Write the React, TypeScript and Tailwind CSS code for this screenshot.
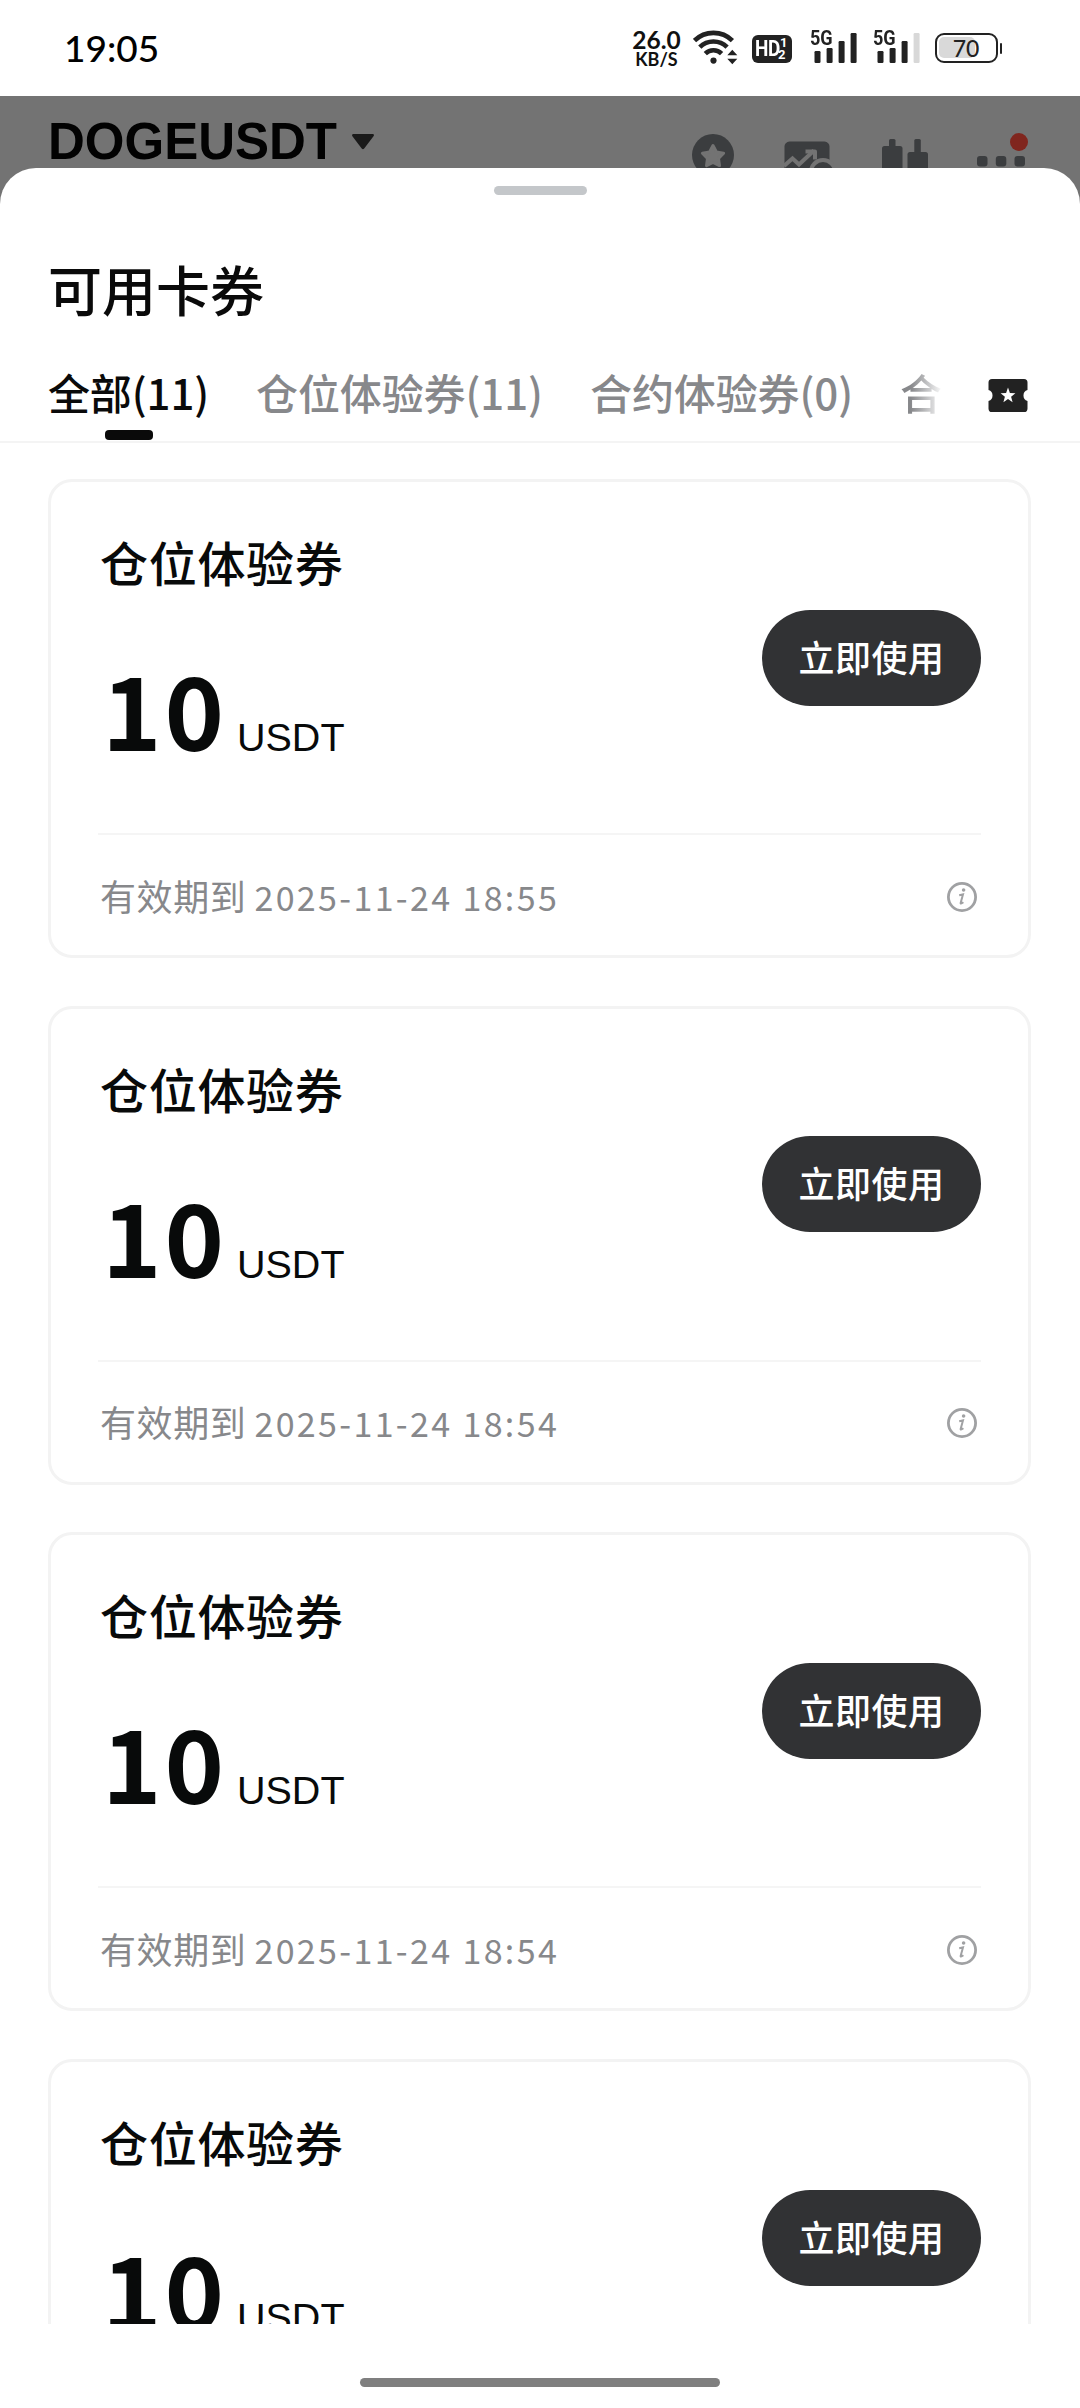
import React from "react";

const CJK = "font-['Noto_Sans_CJK_SC','Noto_Sans',sans-serif]";

function StatusBar() {
  return (
    <div className="flex h-24 shrink-0 items-start bg-white">
      <div className="mt-[25px] ml-[64px] w-[100px] shrink-0 font-['Lato',sans-serif] text-[37px] leading-[46px] font-medium text-black">
        19:05
      </div>
      <div className="mr-[78px] ml-auto flex items-start">
        <div className="mt-[27px] mr-[12px] flex w-[48px] shrink-0 flex-col items-center font-['Lato',sans-serif] font-bold text-[#111]">
          <div className="text-[24.5px] leading-[25px] whitespace-nowrap">26.0</div>
          <div className="text-[18px] leading-[14px] whitespace-nowrap">KB/S</div>
        </div>
        <svg className="mt-[30px] h-[35px] w-[45px] shrink-0" viewBox="693 30 45 35" fill="none">
          <g stroke="#222" strokeWidth="4.6">
            <path d="M694.5 40.6a27 27 0 0 1 37.9 0" />
            <path d="M699.8 47.2a19.3 19.3 0 0 1 27.3 0" />
            <path d="M705.3 53.6a11.6 11.6 0 0 1 16.3 0" />
          </g>
          <circle cx="713.5" cy="60.6" r="3.1" fill="#222" />
          <path d="M727.3 55.2l5-5.4 5 5.4zM727.3 58.8l5 5.4 5-5.4z" fill="#222" />
        </svg>
        <div className="mt-[35px] ml-[14px] flex h-[28px] w-[40px] shrink-0 items-center justify-center rounded-[6px] bg-[#222] font-['Roboto',sans-serif] font-bold text-white">
          <span className="inline-block w-[25px] origin-left scale-x-[0.86] text-[22px] leading-[28px] tracking-[-0.5px]">HD</span>
          <span className="flex w-[8px] flex-col text-[13px] leading-[12px]">
            <span>1</span>
            <span className="-ml-[2px]">2</span>
          </span>
        </div>
        <Signal className="ml-[18px]" last="#222" />
        <Signal className="ml-[16px]" last="#d8d8d8" />
        <div className="mt-[33px] ml-[15px] flex shrink-0 items-center">
          <div className="relative flex h-[30px] w-[63px] items-center justify-center rounded-[9px] border-[2.5px] border-[#222] bg-white">
            <div className="absolute top-[2px] left-[2px] h-[21px] w-[36px] rounded-[5px] bg-[#d9d9d9]" />
            <span className="relative font-['Lato',sans-serif] text-[23px] leading-[24px] font-medium text-[#222]">70</span>
          </div>
          <div className="ml-[2px] h-[11px] w-[2.5px] rounded-[1px] bg-[#222]" />
        </div>
      </div>
    </div>
  );
}

function Signal({ className, last }: { className: string; last: string }) {
  return (
    <div className={"relative mt-[30px] h-[33px] w-[47px] shrink-0 " + className}>
      <svg className="block h-[33px] w-[47px]" viewBox="0 0 47 33" fill="#222">
        <rect x="4.5" y="21" width="6" height="12" rx="1.2" />
        <rect x="16.6" y="18" width="6" height="15" rx="1.2" />
        <rect x="28.6" y="11" width="6" height="22" rx="1.2" />
        <rect x="40.6" y="3" width="6" height="30" rx="1.2" fill={last} />
      </svg>
      <span className="absolute top-0 left-0 origin-left scale-x-[0.86] font-['Roboto',sans-serif] text-[21px] leading-[17px] font-bold text-[#222]">
        5G
      </span>
    </div>
  );
}

function PairHeader() {
  return (
    <div className="flex h-[72px] shrink-0 items-start overflow-hidden bg-[#737373] pr-[51px]">
      <div className="mt-[16px] ml-[48px] w-[293px] shrink-0 font-['Liberation_Sans',Arial,sans-serif] text-[51px] leading-[60px] font-bold text-[#020202]">
        DOGEUSDT
      </div>
      <svg className="mt-[38px] ml-[11px] h-[16px] w-[22px] shrink-0" viewBox="0 0 22 16">
        <path d="M1.4 0h19.2c1.2 0 1.8 1.3.9 2.3l-9.3 12.2a1.6 1.6 0 0 1-2.5 0L.4 2.3C-.3 1.3.2 0 1.4 0z" fill="#1a1a1a" />
      </svg>
      <svg className="mt-[38px] ml-auto h-[42px] w-[42px] shrink-0" viewBox="693 134 42 42">
        <circle cx="714" cy="155" r="21" fill="#3b3d3f" />
        <path
          d="M714 145.5l3.4 6.5 7.2 1.2-5.1 5.2 1 7.2-6.5-3.2-6.5 3.2 1-7.2-5.1-5.2 7.2-1.2z"
          fill="#737373"
          stroke="#737373"
          strokeWidth="3"
          strokeLinejoin="round"
        />
      </svg>
      <svg className="mt-[45px] ml-[50px] h-[40px] w-[50px] shrink-0" viewBox="785 141 50 40">
        <path d="M785.5 147a5 5 0 0 1 5-5.500h35a5 5 0 0 1 5 5.500v32h-45z" fill="#3b3d3f" />
        <path d="M785 166l8.500-7.500 6.500 6 15-14" fill="none" stroke="#737373" strokeWidth="4" />
        <path d="M806.500 151.500h9.500v8" fill="none" stroke="#737373" strokeWidth="4" strokeLinejoin="round" />
        <circle cx="824" cy="172" r="14" fill="#737373" />
        <circle cx="824" cy="172" r="10" fill="#3b3d3f" />
      </svg>
      <svg className="mt-[42px] ml-[48px] h-[40px] w-[46px] shrink-0" viewBox="883 138 46 40" fill="#3b3d3f">
        <rect x="890" y="139" width="6.5" height="14" rx="1.5" />
        <rect x="883" y="146" width="20.5" height="34" rx="2.5" />
        <rect x="915.3" y="139" width="6.5" height="18" rx="1.5" />
        <rect x="908.5" y="152" width="20.5" height="34" rx="2.5" />
      </svg>
      <svg className="mt-[36px] ml-[49px] h-[36px] w-[52px] shrink-0" viewBox="978 132 52 36">
        <g fill="#3b3d3f">
          <rect x="978" y="156" width="10.5" height="10.5" rx="3" />
          <rect x="996.8" y="156" width="10.5" height="10.5" rx="3" />
          <rect x="1015.5" y="156" width="10.5" height="10.5" rx="3" />
        </g>
        <circle cx="1020" cy="142" r="9" fill="#80261e" />
      </svg>
    </div>
  );
}

function TicketIcon() {
  return (
    <svg className="h-[33px] w-[40px] shrink-0" viewBox="0 0 40 32" preserveAspectRatio="none">
      <path
        d="M4 0h32a3.500 3.500 0 0 1 3.500 3.500v7.200a5.500 5.500 0 0 0 0 10.600v7.200A3.500 3.500 0 0 1 36 32H4a3.500 3.500 0 0 1-3.500-3.500v-7.200a5.500 5.500 0 0 0 0-10.600V3.500A3.500 3.500 0 0 1 4 0z"
        fill="#222"
      />
      <path d="M20 8.300l1.900 5.200 5.500.2-4.300 3.400 1.500 5.400-4.600-3.100-4.600 3.100 1.500-5.400-4.300-3.400 5.500-.2z" fill="#fff" />
    </svg>
  );
}

function Tabs() {
  return (
    <div className="flex h-[83px] shrink-0 items-start border-b-2 border-[#f4f4f4] pr-[52px]">
      <div className="flex w-[890px] shrink-0 items-start gap-[48px] pl-[49px] text-[42px] leading-[64px] font-medium tracking-[-0.1px] whitespace-nowrap text-[#87888b]">
        <div className="flex w-[159px] shrink-0 flex-col items-center text-[#0a0a0a]">
          <span>全部(11)</span>
          <span className="mt-[6px] h-[10px] w-[48px] rounded-[4px] bg-[#0a0a0a]" />
        </div>
        <div className="w-[286px] shrink-0">仓位体验券(11)</div>
        <div className="w-[262px] shrink-0">合约体验券(0)</div>
      </div>
      <div className="ml-[10px] w-[43px] shrink-0 bg-gradient-to-r from-[#87888b] from-25% to-white bg-clip-text text-[42px] leading-[64px] font-medium text-transparent">
        合
      </div>
      <div className="mt-[19px] ml-auto">
        <TicketIcon />
      </div>
    </div>
  );
}

function Coupon({ expires }: { expires: string }) {
  return (
    <div className="flex h-[479px] w-[983px] shrink-0 flex-col rounded-[24px] border-3 border-[#f3f3f3] bg-white px-[47px]">
      <div className="flex h-[353px] shrink-0 items-center justify-between border-b-2 border-[#f5f5f5]">
        <div className="flex h-full flex-col pl-[2px] text-[#080a0a]">
          <div className="mt-[43px] text-[48px] leading-[72px] font-medium tracking-[0.7px]">仓位体验券</div>
          <div className="mt-[36px] flex items-baseline">
            <span className="w-[128px] pl-[2px] text-[101px] leading-[148px] font-bold tracking-[3px]">10</span>
            <span className="ml-[9px] font-['Liberation_Sans',Arial,sans-serif] text-[39.5px] leading-[48px]">USDT</span>
          </div>
        </div>
        <button className="flex h-[96px] w-[219px] items-center justify-center rounded-full bg-[#313234] pb-[4px] text-[36px] font-medium tracking-[0.5px] text-white">
          立即使用
        </button>
      </div>
      <div className="flex h-[121px] shrink-0 items-center justify-between pr-[4px] text-[#87888b]">
        <div className="flex items-baseline pl-[2px] text-[36px] leading-[54px]">
          <span className="tracking-[0.6px]">有效期到</span>
          <span className="ml-[8px] text-[34px] tracking-[2.35px]">{expires}</span>
        </div>
        <svg className="mt-[2px] h-[30px] w-[30px] shrink-0" viewBox="0 0 30 30">
          <circle cx="15" cy="15" r="13.6" fill="none" stroke="#a0a1a3" strokeWidth="2.8" />
          <circle cx="16.6" cy="8" r="1.8" fill="#a0a1a3" />
          <path d="M12.2 13.2l3.8-.8-2.3 8.300c-.3 1.200.4 1.300 2.700-.4" fill="none" stroke="#a0a1a3" strokeWidth="2" />
        </svg>
      </div>
    </div>
  );
}

const EXPIRY_TIMES = ["2025-11-24 18:55", "2025-11-24 18:54", "2025-11-24 18:54", "2025-11-24 18:54"];

export default function App() {
  return (
    <div className={"flex h-[2408px] w-[1080px] flex-col overflow-hidden bg-[#737373] " + CJK}>
      <StatusBar />
      <PairHeader />
      <div className="flex min-h-0 grow flex-col rounded-t-[36px] bg-white">
        <div className="mx-auto mt-[18px] h-[9px] w-[93px] shrink-0 rounded-full bg-[#c4c7ca]" />
        <h1 className="mt-[54px] ml-[48px] shrink-0 text-[54px] leading-[80px] font-medium text-[#0a0a0a]">可用卡券</h1>
        <div className="mt-[31px] shrink-0">
          <Tabs />
        </div>
        <div className="flex h-[1881px] shrink-0 flex-col gap-[47.7px] overflow-hidden pt-[36px] pl-[48px]">
          {EXPIRY_TIMES.map((t, i) => (
            <Coupon key={i} expires={t} />
          ))}
        </div>
        <div className="mx-auto mt-[54px] h-[9px] w-[360px] shrink-0 rounded-full bg-[#7f7f7f]" />
      </div>
    </div>
  );
}
